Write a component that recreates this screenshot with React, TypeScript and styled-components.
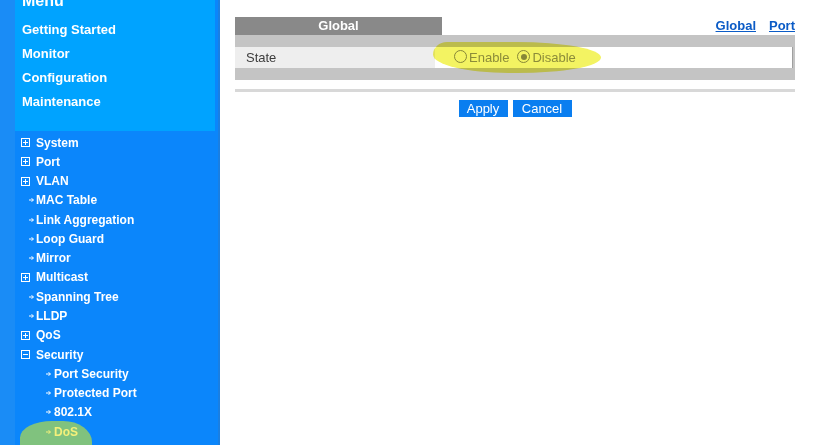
import React from 'react'
import styled, { createGlobalStyle } from 'styled-components'

const GlobalStyle = createGlobalStyle`
  html, body {
    margin: 0;
    padding: 0;
    background: #ffffff;
    font-family: "Liberation Sans", Arial, sans-serif;
  }
`

const Page = styled.div`
  display: grid;
  grid-template-columns: 220px 1fr;
  width: 832px;
  height: 445px;
  overflow: hidden;
`

const Sidebar = styled.aside`
  display: flex;
  flex-direction: column;
  background: #0b86fb;
  border-left: 15px solid #1a8cf6;
  border-right: 2px solid #1a7fe2;
  height: 445px;
  overflow: hidden;
`

const TopPanel = styled.div`
  width: 200px;
  height: 131px;
  flex: none;
  background: #00a3ff;
  padding-left: 7px;
  box-sizing: border-box;
`

const MenuTitle = styled.div`
  font-size: 16px;
  font-weight: bold;
  color: #ffffff;
  line-height: 18px;
  margin-top: -8px;
`

const TopLinks = styled.div`
  padding-top: 8px;
`

const TopLink = styled.div`
  font-size: 13px;
  font-weight: bold;
  color: #ffffff;
  line-height: 24px;
`

const Tree = styled.ul`
  position: relative;
  list-style: none;
  margin: 0;
  padding: 2px 0 0 0;
`

const Item = styled.li<{ $selected?: boolean }>`
  position: relative;
  display: flex;
  align-items: center;
  height: 19.27px;
  font-size: 12px;
  font-weight: bold;
  color: ${(p) => (p.$selected ? '#f4f07a' : '#ffffff')};
  white-space: nowrap;
`

const Slot = styled.span<{ $width: number; $gap: number }>`
  display: flex;
  justify-content: flex-end;
  align-items: center;
  flex: none;
  width: ${(p) => p.$width}px;
  padding-right: ${(p) => p.$gap}px;
  box-sizing: border-box;
`

const ToggleBox = styled.span`
  position: relative;
  width: 9px;
  height: 9px;
  border: 1px solid #ffffff;
  box-sizing: border-box;

  &::before,
  &::after {
    content: "";
    position: absolute;
    background: #ffffff;
  }
  &::before {
    left: 1px;
    right: 1px;
    top: 3px;
    height: 1px;
  }
`

const PlusBox = styled(ToggleBox)`
  &::after {
    top: 1px;
    bottom: 1px;
    left: 3px;
    width: 1px;
  }
`

const Label = styled.span`
  position: relative;
  z-index: 1;
`

const GreenMark = styled.span`
  position: absolute;
  left: 5px;
  top: -1px;
  width: 72px;
  height: 30px;
  background: #80c27e;
  border-radius: 45% 40% 0 0 / 55% 70% 0 0;
`

const Arrow = () => (
  <svg width="5" height="6" viewBox="0 0 5 6" style={{ position: 'relative', zIndex: 1 }}>
    <path d="M0 3H4.4M2.6 1.2L4.4 3L2.6 4.8" stroke="currentColor" strokeWidth="1" fill="none" />
  </svg>
)

const Content = styled.main`
  position: relative;
  padding: 17px 37px 0 15px;
`

const HeaderRow = styled.div`
  display: flex;
  justify-content: space-between;
  align-items: flex-end;
`

const TabHead = styled.div`
  width: 207px;
  height: 18px;
  line-height: 18px;
  background: #898989;
  color: #ffffff;
  font-size: 13px;
  font-weight: bold;
  text-align: center;
`

const Links = styled.div`
  display: flex;
  gap: 13px;
  padding-bottom: 1px;
`

const TopTab = styled.a`
  font-size: 13px;
  font-weight: bold;
  color: #0b5bc6;
  text-decoration: underline;
  line-height: 16px;
`

const Table = styled.div`
  background: #c4c4c4;
  padding: 12px 2px 12px 0;
`

const Row = styled.div`
  display: grid;
  grid-template-columns: 200px 1fr;
  height: 21px;
`

const KeyCell = styled.div`
  background: #eeeeee;
  color: #3c3c3c;
  font-size: 13px;
  line-height: 21px;
  padding-left: 11px;
`

const ValueCell = styled.div`
  display: flex;
  align-items: center;
  gap: 8px;
  background: #ffffff;
  border-right: 1px solid #a0a0a0;
  padding-left: 19px;
`

const Option = styled.label`
  display: flex;
  align-items: center;
  gap: 2px;
  font-size: 13px;
  color: #939393;
`

const Radio = styled.span<{ $checked?: boolean }>`
  position: relative;
  width: 13px;
  height: 13px;
  border: 1px solid #8e8e8e;
  border-radius: 50%;
  box-sizing: border-box;
  margin-top: -2px;

  &::after {
    content: "";
    display: ${(p) => (p.$checked ? 'block' : 'none')};
    position: absolute;
    left: 2.5px;
    top: 2.5px;
    width: 6px;
    height: 6px;
    border-radius: 50%;
    background: #8e8e8e;
  }
`

const Separator = styled.div`
  margin-top: 9px;
  height: 3px;
  background: #d8d8d8;
`

const Buttons = styled.div`
  display: flex;
  justify-content: center;
  gap: 5px;
  margin-top: 8px;
`

const Button = styled.button<{ $width: number }>`
  width: ${(p) => p.$width}px;
  height: 17px;
  padding: 0;
  border: none;
  background: #0a7ef0;
  color: #ffffff;
  font-family: "Liberation Sans", Arial, sans-serif;
  font-size: 13px;
  line-height: 17px;
`

const Highlight = styled.span`
  position: absolute;
  left: 213px;
  top: 42px;
  width: 168px;
  height: 31px;
  background: #f3f362;
  mix-blend-mode: multiply;
  border-radius: 14px 50% 50% 45% / 40% 50% 50% 60%;
  pointer-events: none;
`

type Node = {
  label: string
  kind: 'plus' | 'minus' | 'arrow' | 'sub'
  selected?: boolean
}

const tree: Node[] = [
  { label: 'System', kind: 'plus' },
  { label: 'Port', kind: 'plus' },
  { label: 'VLAN', kind: 'plus' },
  { label: 'MAC Table', kind: 'arrow' },
  { label: 'Link Aggregation', kind: 'arrow' },
  { label: 'Loop Guard', kind: 'arrow' },
  { label: 'Mirror', kind: 'arrow' },
  { label: 'Multicast', kind: 'plus' },
  { label: 'Spanning Tree', kind: 'arrow' },
  { label: 'LLDP', kind: 'arrow' },
  { label: 'QoS', kind: 'plus' },
  { label: 'Security', kind: 'minus' },
  { label: 'Port Security', kind: 'sub' },
  { label: 'Protected Port', kind: 'sub' },
  { label: '802.1X', kind: 'sub' },
  { label: 'DoS', kind: 'sub', selected: true },
]

function TreeItem({ node }: { node: Node }) {
  const marker =
    node.kind === 'plus' ? <PlusBox /> : node.kind === 'minus' ? <ToggleBox /> : <Arrow />
  const width = node.kind === 'sub' ? 39 : 21
  const gap = node.kind === 'plus' || node.kind === 'minus' ? 6 : node.kind === 'sub' ? 3 : 2
  return (
    <Item $selected={node.selected}>
      {node.selected && <GreenMark />}
      <Slot $width={width} $gap={gap}>
        {marker}
      </Slot>
      <Label>{node.label}</Label>
    </Item>
  )
}

export default function App() {
  return (
    <>
      <GlobalStyle />
      <Page>
        <Sidebar>
          <TopPanel>
            <MenuTitle>Menu</MenuTitle>
            <TopLinks>
              <TopLink>Getting Started</TopLink>
              <TopLink>Monitor</TopLink>
              <TopLink>Configuration</TopLink>
              <TopLink>Maintenance</TopLink>
            </TopLinks>
          </TopPanel>
          <Tree>
            {tree.map((n) => (
              <TreeItem key={n.label} node={n} />
            ))}
          </Tree>
        </Sidebar>
        <Content>
          <HeaderRow>
            <TabHead>Global</TabHead>
            <Links>
              <TopTab>Global</TopTab>
              <TopTab>Port</TopTab>
            </Links>
          </HeaderRow>
          <Table>
            <Row>
              <KeyCell>State</KeyCell>
              <ValueCell>
                <Option>
                  <Radio />
                  Enable
                </Option>
                <Option>
                  <Radio $checked />
                  Disable
                </Option>
              </ValueCell>
            </Row>
          </Table>
          <Separator />
          <Buttons>
            <Button $width={49}>Apply</Button>
            <Button $width={59}>Cancel</Button>
          </Buttons>
          <Highlight />
        </Content>
      </Page>
    </>
  )
}
